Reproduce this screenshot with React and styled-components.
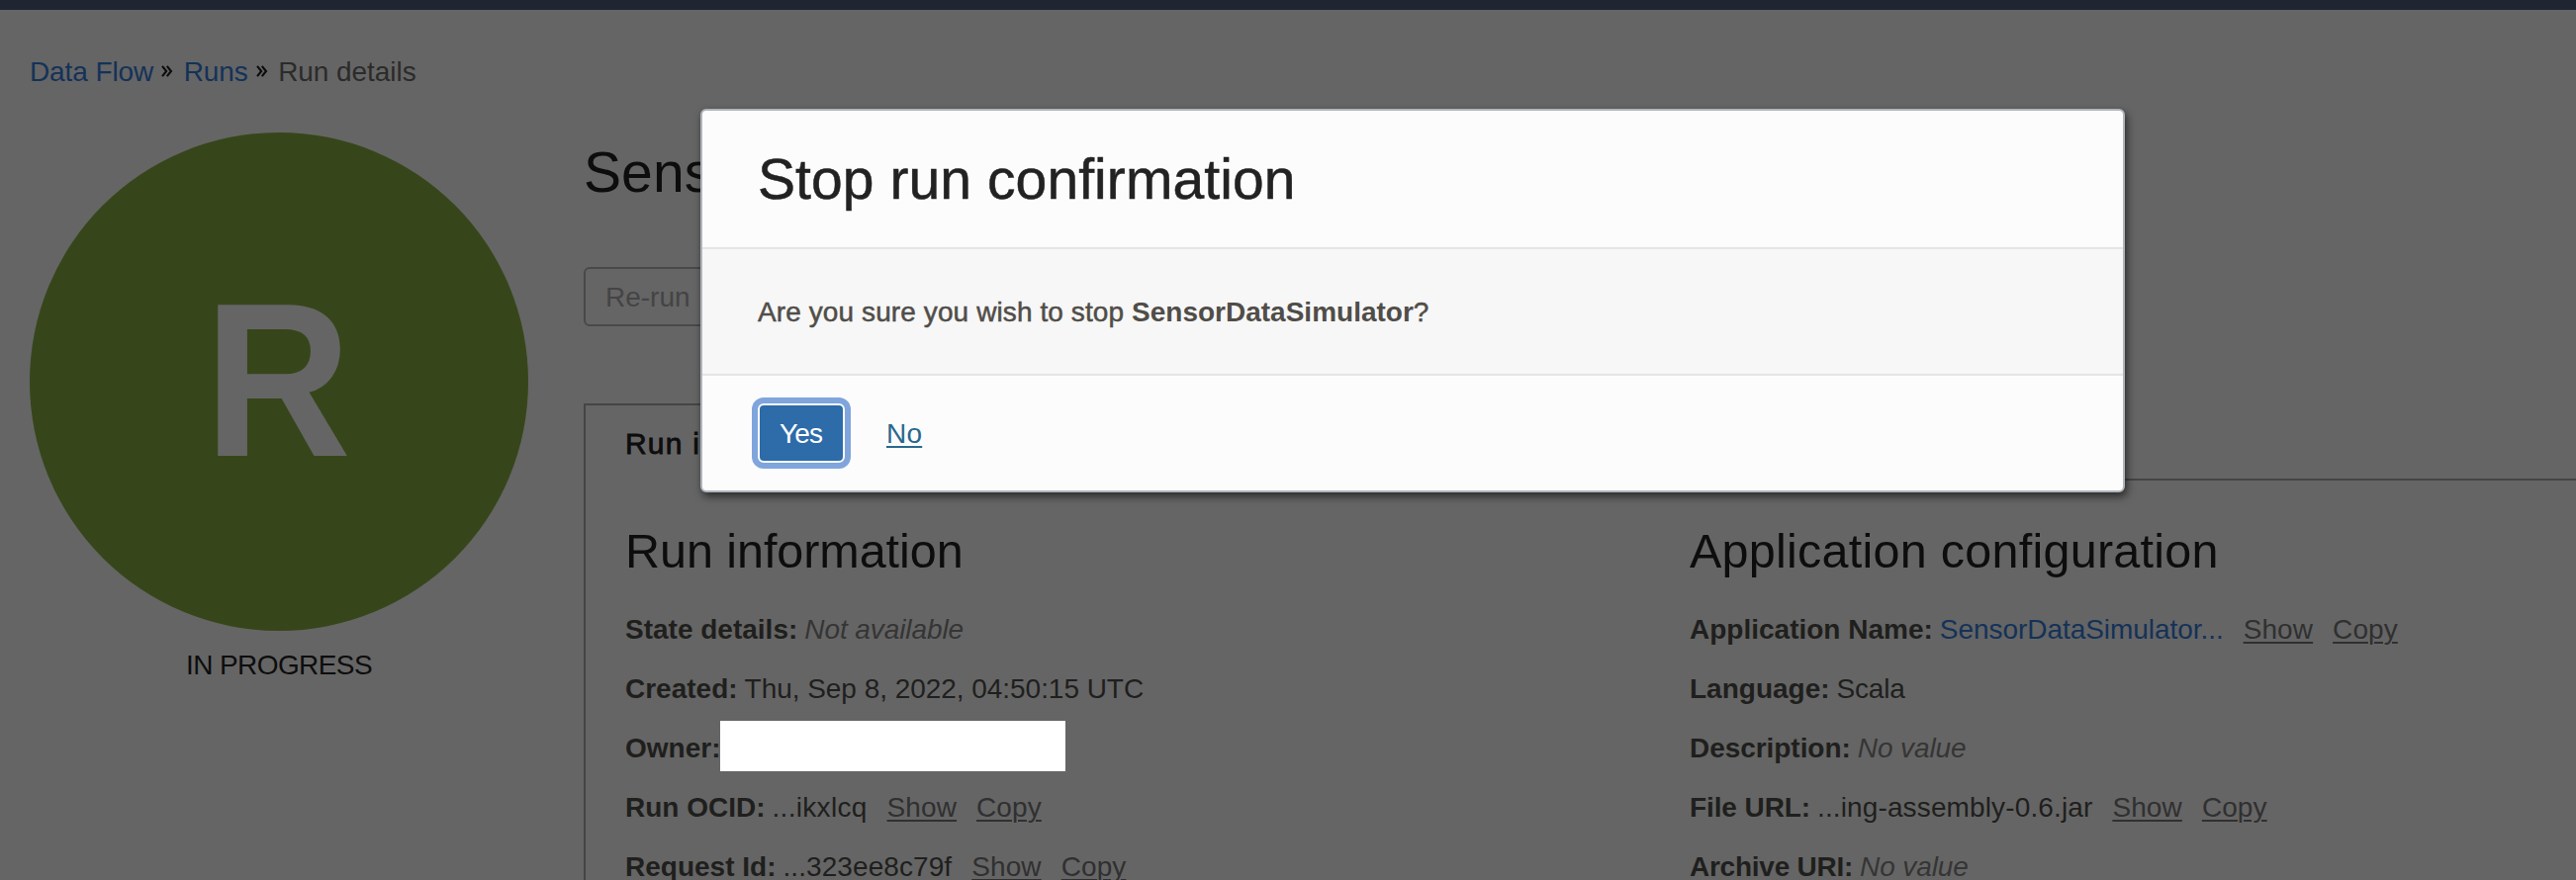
import React from "react";
import styled, { createGlobalStyle } from "styled-components";

const GlobalStyle = createGlobalStyle`
  * { box-sizing: border-box; }
  html, body { margin: 0; padding: 0; overflow: hidden; }
  body {
    background: #656565;
    font-family: "Liberation Sans", Arial, sans-serif;
    font-size: 28px;
    color: #1f1f1d;
  }
`;

const Page = styled.div`
  position: relative;
  height: 890px;
  overflow: hidden;
  background: #656565;
`;

const TopBar = styled.header`
  height: 10px;
  background: #1f2631;
`;

const Breadcrumbs = styled.nav`
  display: flex;
  align-items: center;
  height: 40px;
  margin: 43px 0 41px 30px;
  line-height: 40px;
  white-space: nowrap;
`;

const Crumb = styled.span`
  color: ${(p) => (p.$current ? "#2b2b2b" : "#143258")};
  letter-spacing: ${(p) => p.$tracking || 0}px;
`;

const ChevronIcon = styled.svg`
  width: 12px;
  height: 12px;
  margin: 0 10.5px 2px 8px;
  fill: none;
  stroke: #0c0c0c;
  stroke-width: 2.1;
`;

const Content = styled.div`
  display: flex;
  gap: 56px;
  padding-left: 30px;
`;

const StatusColumn = styled.aside`
  flex: 0 0 504px;
  display: flex;
  flex-direction: column;
  align-items: center;
`;

const StatusCircle = styled.div`
  display: flex;
  align-items: center;
  justify-content: center;
  width: 504px;
  height: 504px;
  border-radius: 50%;
  background: #36461a;
`;

const StatusLetter = styled.span`
  padding-right: 2px;
  font-size: 221px;
  font-weight: bold;
  line-height: 502px;
  margin-bottom: 2px;
  color: #656565;
  transform: scaleX(0.931);
`;

const StatusLabel = styled.div`
  margin-top: 15px;
  line-height: 40px;
  letter-spacing: -0.58px;
  color: #0d0d0d;
`;

const Main = styled.main`
  flex: 1;
  min-width: 0;
`;

const PageTitle = styled.h1`
  margin: 0 0 56px;
  font-size: 57px;
  font-weight: normal;
  line-height: 80px;
  letter-spacing: 0.1px;
  color: #0d0d0d;
`;

const Toolbar = styled.div`
  display: flex;
  gap: 16px;
  margin-bottom: 78px;
`;

const ActionButton = styled.button`
  height: 60px;
  padding: 2px 20px 0;
  border: 2px solid #494949;
  border-radius: 6px;
  background: transparent;
  font: inherit;
  line-height: 54px;
  color: #444444;
`;

const TabBar = styled.div`
  display: flex;
`;

const Tab = styled.div`
  height: 78px;
  padding: 1px 40px 0;
  border: solid #454545;
  border-width: 2px 2px 0;
  font-size: 30px;
  line-height: 76px;
  letter-spacing: 1.2px;
  color: #0d0d0d;
  -webkit-text-stroke: 0.8px #0d0d0d;
`;

const TabBarRule = styled.div`
  flex: 1;
  border-bottom: 2px solid #454545;
`;

const Panel = styled.section`
  display: grid;
  grid-template-columns: 1076px 1fr;
  padding: 41px 0 0 40px;
  border-left: 2px solid #454545;
`;

const SectionTitle = styled.h2`
  margin: 0 0 19px;
  font-size: 48.5px;
  font-weight: normal;
  line-height: 60px;
  letter-spacing: ${(p) => p.$tracking}px;
  color: #0d0d0d;
`;

const Row = styled.div`
  display: flex;
  align-items: center;
  height: 60px;
  padding-top: 2px;
  line-height: 58px;
  white-space: nowrap;
`;

const Label = styled.b`
  letter-spacing: ${(p) => p.$tracking || 0}px;
`;

const Value = styled.span`
  margin-left: 7px;
  letter-spacing: ${(p) => p.$tracking || 0}px;
  font-style: ${(p) => (p.$empty ? "italic" : "normal")};
  color: ${(p) => (p.$link ? "#143258" : p.$empty ? "#353535" : "#1f1f1d")};
`;

const TextAction = styled.a`
  margin-left: 20px;
  letter-spacing: 0.1px;
  color: #303030;
  text-decoration: underline;
  text-decoration-thickness: 2px;
  text-underline-offset: 3px;
`;

const Redaction = styled.div`
  width: 349px;
  height: 51px;
  margin-bottom: 5px;
  background: #ffffff;
`;

const Dialog = styled.div`
  position: absolute;
  top: 110px;
  left: 708px;
  width: 1440px;
  height: 388px;
  border: 2px solid #b0b5bc;
  border-radius: 6px;
  background: #fcfcfc;
  box-shadow: 2px 4px 8px rgba(0, 0, 0, 0.6);
`;

const DialogTitle = styled.h2`
  height: 140px;
  margin: 0;
  padding-left: 56px;
  border-bottom: 2px solid #e5e5e5;
  font-size: 57px;
  font-weight: normal;
  line-height: 138px;
  letter-spacing: 0.08px;
  color: #222222;
  -webkit-text-stroke: 0.5px #222222;
`;

const DialogBody = styled.p`
  height: 128px;
  margin: 0;
  padding: 1px 0 0 56px;
  border-bottom: 2px solid #e5e5e5;
  background: #f7f7f7;
  line-height: 126px;
  letter-spacing: 0.1px;
  color: #504d48;
  -webkit-text-stroke: 0.5px #504d48;
`;

const DialogName = styled.b`
  letter-spacing: 0;
  -webkit-text-stroke: 0;
`;

const DialogActions = styled.div`
  display: flex;
  align-items: center;
  gap: 42px;
  padding: 28px 0 0 56px;
`;

const ConfirmButton = styled.button`
  width: 88px;
  height: 60px;
  padding: 2px 1px 0 0;
  border: 2px solid #fcfcfc;
  border-radius: 6px;
  background: #2d6ba9;
  box-shadow: 0 0 0 6px #7fa5dc;
  font: inherit;
  line-height: 54px;
  letter-spacing: -0.9px;
  color: #ffffff;
`;

const CancelLink = styled.a`
  padding-top: 2px;
  line-height: 58px;
  letter-spacing: 0.2px;
  color: #29688d;
  text-decoration: underline;
  text-decoration-thickness: 2px;
  text-underline-offset: 3px;
`;

function Chevrons() {
  return (
    <ChevronIcon viewBox="0 0 12 12">
      <path d="M1 0.8L5.2 6L1 11.2M5.8 0.8L10 6L5.8 11.2" />
    </ChevronIcon>
  );
}

const runInformation = [
  { label: "State details:", value: "Not available", empty: true, tracking: -0.08 },
  { label: "Created:", value: "Thu, Sep 8, 2022, 04:50:15 UTC", tracking: -0.04 },
  { label: "Owner:", redacted: true },
  { label: "Run OCID:", value: "...ikxlcq", actions: true, tracking: 0.3 },
  { label: "Request Id:", value: "...323ee8c79f", actions: true, tracking: 0.08 },
];

const applicationConfiguration = [
  {
    label: "Application Name:",
    value: "SensorDataSimulator...",
    link: true,
    actions: true,
    tracking: -0.05,
  },
  { label: "Language:", value: "Scala", tracking: -0.2 },
  { label: "Description:", value: "No value", empty: true, labelTracking: -0.05, tracking: -0.1 },
  {
    label: "File URL:",
    value: "...ing-assembly-0.6.jar",
    actions: true,
    labelTracking: -0.1,
    tracking: 0.13,
  },
  { label: "Archive URI:", value: "No value", empty: true, labelTracking: -0.25, tracking: -0.1 },
];

function Details({ title, tracking, rows }) {
  return (
    <div>
      <SectionTitle $tracking={tracking}>{title}</SectionTitle>
      {rows.map((row) => (
        <Row key={row.label}>
          <Label $tracking={row.labelTracking}>{row.label}</Label>
          {row.redacted ? (
            <Redaction />
          ) : (
            <Value $empty={row.empty} $link={row.link} $tracking={row.tracking}>
              {row.value}
            </Value>
          )}
          {row.actions && (
            <>
              <TextAction>Show</TextAction>
              <TextAction>Copy</TextAction>
            </>
          )}
        </Row>
      ))}
    </div>
  );
}

export default function App() {
  return (
    <Page>
      <GlobalStyle />
      <TopBar />
      <Breadcrumbs>
        <Crumb $tracking={-0.1}>Data Flow</Crumb>
        <Chevrons />
        <Crumb $tracking={-0.1}>Runs</Crumb>
        <Chevrons />
        <Crumb $current $tracking={-0.05}>
          Run details
        </Crumb>
      </Breadcrumbs>
      <Content>
        <StatusColumn>
          <StatusCircle>
            <StatusLetter>R</StatusLetter>
          </StatusCircle>
          <StatusLabel>IN PROGRESS</StatusLabel>
        </StatusColumn>
        <Main>
          <PageTitle>Sens</PageTitle>
          <Toolbar>
            <ActionButton>Re-run</ActionButton>
          </Toolbar>
          <TabBar>
            <Tab>Run i</Tab>
            <TabBarRule />
          </TabBar>
          <Panel>
            <Details title="Run information" tracking={-0.05} rows={runInformation} />
            <Details
              title="Application configuration"
              tracking={0.25}
              rows={applicationConfiguration}
            />
          </Panel>
        </Main>
      </Content>
      <Dialog role="dialog">
        <DialogTitle>Stop run confirmation</DialogTitle>
        <DialogBody>
          Are you sure you wish to stop <DialogName>SensorDataSimulator</DialogName>?
        </DialogBody>
        <DialogActions>
          <ConfirmButton>Yes</ConfirmButton>
          <CancelLink>No</CancelLink>
        </DialogActions>
      </Dialog>
    </Page>
  );
}
